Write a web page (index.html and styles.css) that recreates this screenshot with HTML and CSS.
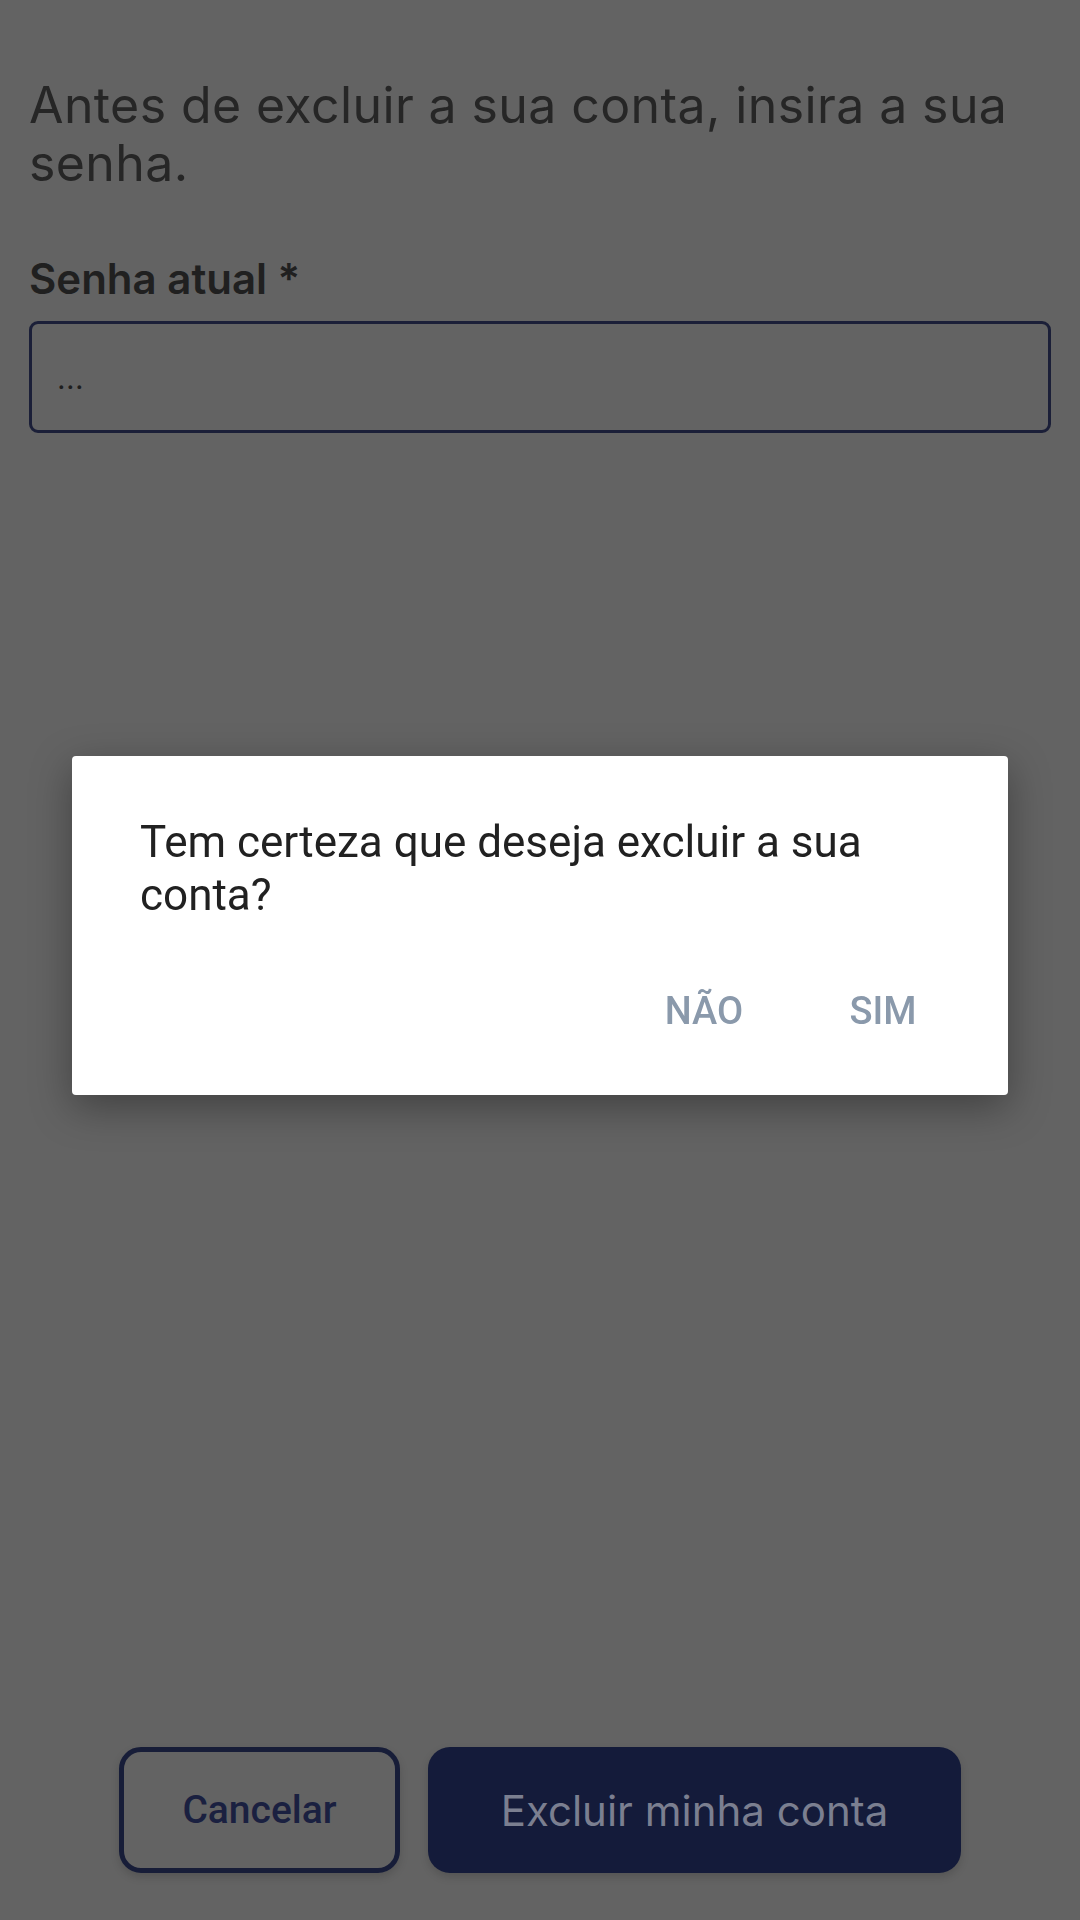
FILE: index.html
```html
<!DOCTYPE html>
<html lang="pt-BR">
<head>
    <meta charset="UTF-8">
    <meta name="viewport" content="width=device-width, initial-scale=1.0">
    <title>Excluir conta</title>
    <link rel="stylesheet" href="styles.css">
</head>
<body>
    <!-- Delete account screen -->
    <div class="page">
        <h1 class="page-title">Antes de excluir a sua conta, insira a sua senha.</h1>

        <label class="field-label" for="senha">Senha atual *</label>
        <div class="field">
            <input class="field-input" id="senha" type="text" value="..." readonly>
        </div>

        <div class="actions">
            <button class="btn btn-outline">Cancelar</button>
            <button class="btn btn-filled">Excluir minha conta</button>
        </div>
    </div>

    <!-- Confirm dialog -->
    <div class="dialog">
        <p class="dialog-message">Tem certeza que deseja excluir a sua conta?</p>
        <div class="dialog-buttons">
            <button class="dialog-btn">Não</button>
            <button class="dialog-btn">Sim</button>
        </div>
    </div>
</body>
</html>
```

FILE: styles.css
```css
* {
    margin: 0;
    padding: 0;
    box-sizing: border-box;
}

body {
    font-family: Inter, 'Open Sans', sans-serif;
    background: #636363;
    width: 1080px;
    min-height: 1920px;
}

.page {
    min-height: 1920px;
    padding: 76px 29px 47px;
    display: flex;
    flex-direction: column;
}

.page-title {
    font-size: 50px;
    font-weight: 400;
    line-height: 58px;
    color: #262626;
    letter-spacing: 0.4px;
}

.field-label {
    margin-top: 63px;
    font-size: 42px;
    font-weight: 600;
    line-height: 48px;
    color: #202020;
}

.field {
    margin-top: 18px;
}

.field-input {
    width: 100%;
    height: 112px;
    border: 3px solid #1b1f38;
    border-radius: 9px;
    background: transparent;
    padding: 0 25px;
    font-family: Roboto, sans-serif;
    font-size: 34px;
    color: #1e1e1e;
    outline: none;
}

/* Bottom buttons */
.actions {
    margin-top: auto;
    display: flex;
    justify-content: center;
    gap: 28px;
}

.btn {
    height: 126px;
    border-radius: 22px;
    cursor: pointer;
    box-shadow: 0 4px 8px rgba(0, 0, 0, 0.15);
}

.btn-outline {
    width: 281px;
    background: transparent;
    border: 5px solid #171d38;
    font-family: Roboto, sans-serif;
    font-weight: 500;
    font-size: 39px;
    color: #1a2040;
}

.btn-filled {
    width: 533px;
    background: #141b3a;
    border: none;
    font-family: Inter, sans-serif;
    font-size: 42px;
    color: #7b7f90;
}

/* Dialog */
.dialog {
    position: fixed;
    top: 756px;
    left: 72px;
    width: 936px;
    height: 339px;
    background: white;
    border-radius: 4px;
    box-shadow: 0 12px 40px rgba(0, 0, 0, 0.35);
    display: flex;
    flex-direction: column;
}

.dialog-message {
    padding: 60px 60px 0 68px;
    font-family: Roboto, sans-serif;
    font-size: 44px;
    line-height: 53px;
    color: #212121;
}

.dialog-buttons {
    margin-top: auto;
    display: flex;
    justify-content: flex-end;
    gap: 11px;
    padding: 0 41px 56px 0;
}

.dialog-btn {
    min-width: 168px;
    height: 56px;
    background: none;
    border: none;
    font-family: Roboto, sans-serif;
    font-weight: 500;
    font-size: 38px;
    text-transform: uppercase;
    color: #8a99ab;
    cursor: pointer;
}
```
